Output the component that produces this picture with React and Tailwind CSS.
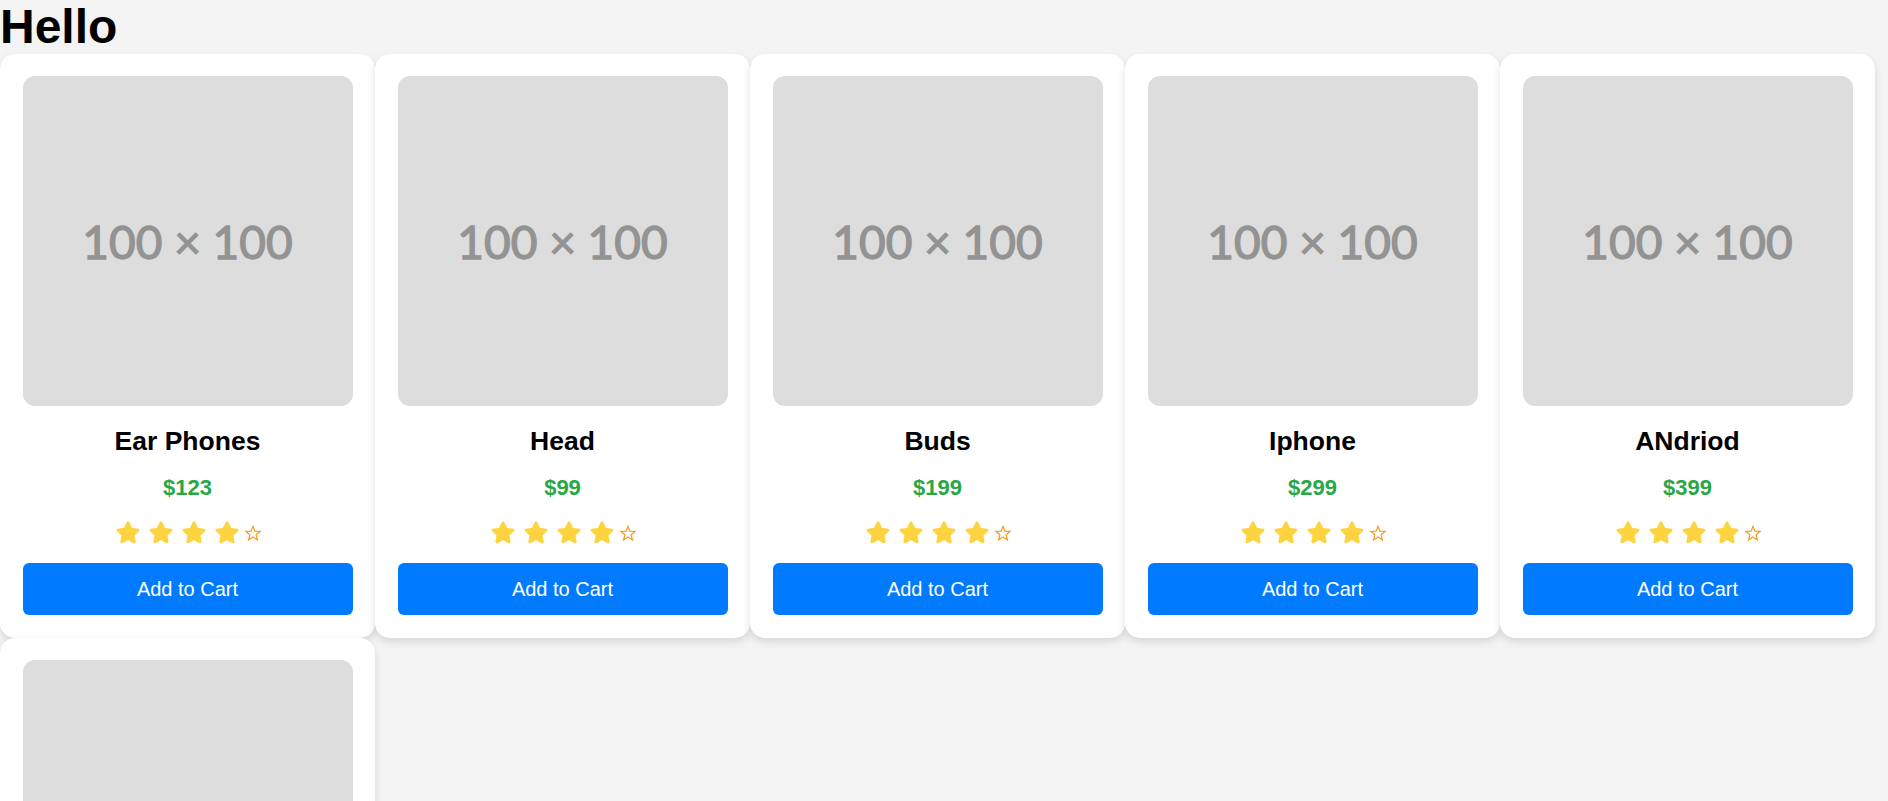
const products = [
  { name: 'Ear Phones', price: 123 },
  { name: 'Head', price: 99 },
  { name: 'Buds', price: 199 },
  { name: 'Iphone', price: 299 },
  { name: 'ANdriod', price: 399 },
  { name: 'Laptop', price: 499 },
];

function FilledStar() {
  return (
    <svg width="24" height="23" viewBox="1 1 22 21" className="block">
      <path
        d="M12 2.6l2.8 5.9 6.4.8-4.7 4.4 1.2 6.4L12 17l-5.7 3.1 1.2-6.4-4.7-4.4 6.4-.8z"
        fill="#fdd33f"
        stroke="#fdd33f"
        strokeWidth="2.6"
        strokeLinejoin="round"
      />
    </svg>
  );
}

function OutlineStar() {
  return (
    <svg width="18" height="17" viewBox="0 0 24 23" className="block">
      <path
        d="M12 1.8l2.6 6.6 7 .4-5.4 4.5 1.8 6.9L12 16.3l-6 3.9 1.8-6.9-5.4-4.5 7-.4z"
        fill="none"
        stroke="#f39a1e"
        strokeWidth="1.6"
        strokeLinejoin="miter"
      />
    </svg>
  );
}

function ProductCard({ product }) {
  return (
    <div className="flex w-[375px] flex-col rounded-[15px] bg-white p-[22.5px] shadow-[0_4px_8px_rgba(0,0,0,0.12)]">
      <div className="flex h-[330px] w-full items-center justify-center rounded-[12px] bg-[#dddddd]">
        <span className="font-['Lato',sans-serif] text-[46px] text-[#939393] [-webkit-text-stroke:1.3px_#939393]">
          100 × 100
        </span>
      </div>
      <h3 className="mt-[20px] text-center text-[26.5px] leading-[1.15] font-bold text-black">
        {product.name}
      </h3>
      <p className="mt-[18px] text-center text-[22px] leading-[1.15] font-bold text-[#28a745]">
        ${product.price}
      </p>
      <div className="mt-[20px] flex h-[24px] items-center justify-center">
        <div className="flex items-center gap-[9px] pl-[2px]">
          <FilledStar />
          <FilledStar />
          <FilledStar />
          <FilledStar />
        </div>
        <div className="ml-[5px] pt-[2px]">
          <OutlineStar />
        </div>
      </div>
      <button
        type="button"
        className="mt-[19px] h-[52px] w-full rounded-[6px] bg-[#007bff] text-[20px] text-white"
      >
        Add to Cart
      </button>
    </div>
  );
}

export default function App() {
  return (
    <div className="min-h-screen bg-[#f4f4f4] font-['Liberation_Sans',Arial,sans-serif]">
      <h1 className="text-[48px] leading-[1.12] font-bold text-black">Hello</h1>
      <div className="flex flex-wrap">
        {products.map((product) => (
          <ProductCard key={product.name} product={product} />
        ))}
      </div>
    </div>
  );
}
